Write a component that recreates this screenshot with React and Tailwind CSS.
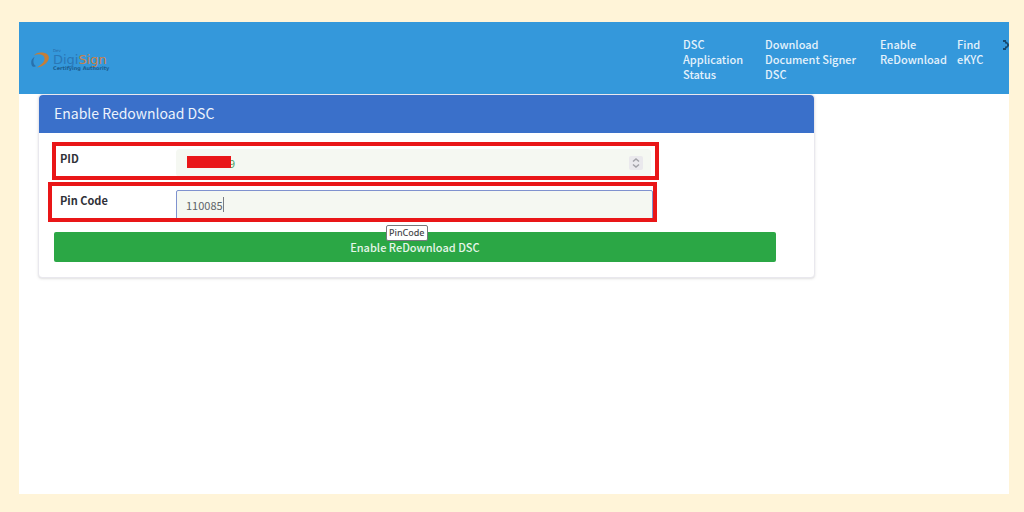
import React from 'react';

const NAV_LINKS = [
  { label: 'DSC Application Status', width: 'w-[82px] pr-4' },
  { label: 'Download Document Signer DSC', width: 'w-[115px] pr-4' },
  { label: 'Enable ReDownload', width: 'w-[77px] pr-2' },
  { label: 'Find eKYC', width: 'w-[46px] pr-3' },
];

function Logo() {
  return (
    <a href="#home" aria-label="DigiSign" className="flex items-center gap-1 pt-1 opacity-80">
      <svg width="18" height="16" viewBox="0 0 18 16" fill="none" aria-hidden="true">
        <path d="M3 3.500C5 0 13-0.500 16.500 2.500C20.500 6.500 15 14 6 15.500C10 12.500 14 10 13.500 6C13 2 7 1.500 3 3.500Z" fill="#e87810" />
        <path d="M3.500 5C0 7 0 10 0.500 12.500C1 15 3 15.500 5 14C2.500 13 1.500 9 3.500 5Z" fill="#2668a3" />
      </svg>
      <span className="flex flex-col font-['DejaVu_Sans']">
        <span className="text-[4px] leading-[4px] text-[#285f98]">Dev</span>
        <span className="text-[13px] leading-[13px] text-[#286fae]">
          Digi<span className="text-[#f07d20]">Sign</span>
        </span>
        <span className="text-[5px] font-bold leading-[5px] text-[#174f7c]">Certifying Authority</span>
      </span>
    </a>
  );
}

function Navbar() {
  return (
    <header className="flex h-[72px] items-center justify-between overflow-hidden bg-[#3498db] pl-3">
      <Logo />
      <nav className="flex self-start pt-[15px]">
        {NAV_LINKS.map((link) => (
          <a key={link.label} href="#nav" className={`text-[11px] font-medium leading-[15px] text-[#e4f2fb] ${link.width}`}>
            {link.label}
          </a>
        ))}
        <button type="button" aria-label="More" className="h-[15px] w-[6px] overflow-hidden">
          <svg width="6" height="12" viewBox="0 0 6 12" fill="none" stroke="#174a70" strokeWidth="2" aria-hidden="true">
            <path d="M0 2H3M0 10H3M3 3V4.500M3 7.500V9M4 6H6" />
            <path d="M3 3L6 6L3 9" strokeWidth="1.500" />
          </svg>
        </button>
      </nav>
    </header>
  );
}

export default function App() {
  return (
    <div className="h-screen bg-[#fff4d8] pt-[22px] pr-[15px] pb-[18px] pl-[19px] font-['Noto_Sans_CJK_SC',sans-serif]">
      <div className="h-full bg-white">
        <Navbar />

        <main className="pl-[19px]">
          <section className="w-[80%] rounded border border-[#e9e8ee] bg-white pb-[15px] shadow-sm">
            <h1 className="rounded-t bg-[#3a70ca] px-[15px] pb-[2px] text-sm leading-[36px] text-[#edf3fc]">
              Enable Redownload DSC
            </h1>

            <form onSubmit={(e) => e.preventDefault()}>
              <div className="mt-[9px] mr-[20%] ml-[13px] flex h-[38px] overflow-hidden border-4 border-[#e91618] pl-1">
                <label htmlFor="pid" className="w-[116px] pt-[3px] text-[11px] font-bold leading-[18px] text-[#303238]">
                  PID
                </label>
                <div className="relative mt-[3px] mr-1 flex-1">
                  <input
                    id="pid"
                    type="number"
                    defaultValue="9"
                    className="h-7 w-full appearance-none rounded bg-[#f5f8f2] pl-[53px] text-[11px] text-[#4e9f67] outline-none [&::-webkit-inner-spin-button]:appearance-none"
                  />
                  <span className="absolute top-[7px] left-[11px] h-3 w-11 bg-[#e91618]" />
                  <span className="absolute top-[7px] right-[8px] flex h-[14px] w-[14px] items-center justify-center rounded-xs bg-[#eae9ed]">
                    <svg width="8" height="10" viewBox="0 0 8 10" fill="none" stroke="#a2a2a8" strokeWidth="1.500" aria-hidden="true">
                      <path d="M1 3.500L4 1L7 3.500M1 6.500L4 9L7 6.500" />
                    </svg>
                  </span>
                </div>
              </div>

              <div className="mt-[2px] mr-[20.3%] ml-[9px] flex h-[40px] overflow-hidden border-4 border-[#e91618] pl-2">
                <label htmlFor="pincode" className="w-[116px] pt-[5px] text-[11px] font-bold leading-[18px] text-[#303238]">
                  Pin Code
                </label>
                <div className="relative mt-1 flex-1">
                  <input
                    id="pincode"
                    type="text"
                    defaultValue="110085"
                    className="h-[30px] w-full rounded-xs border border-[#7f92cf] bg-[#f5f8f2] pl-[9px] text-[11px] text-[#606368] outline-none"
                  />
                  <span className="absolute top-[7px] left-[47px] h-[15px] w-px bg-[#7a7d83]" />
                </div>
              </div>

              <div className="relative mt-[10px] mr-[38px] ml-[15px]">
                <button type="submit" className="h-[30px] w-full rounded-xs bg-[#2ba745] text-[11px] font-medium leading-[30px] text-[#e6f6e9]">
                  Enable ReDownload DSC
                </button>
                <span
                  role="tooltip"
                  className="absolute -top-[7px] left-[46%] h-4 rounded-xs border border-[#77797d] bg-white px-[2px] font-['Noto_Sans'] text-[9px] font-medium leading-[14px] text-[#46464a]"
                >
                  PinCode
                </span>
              </div>
            </form>
          </section>
        </main>
      </div>
    </div>
  );
}
